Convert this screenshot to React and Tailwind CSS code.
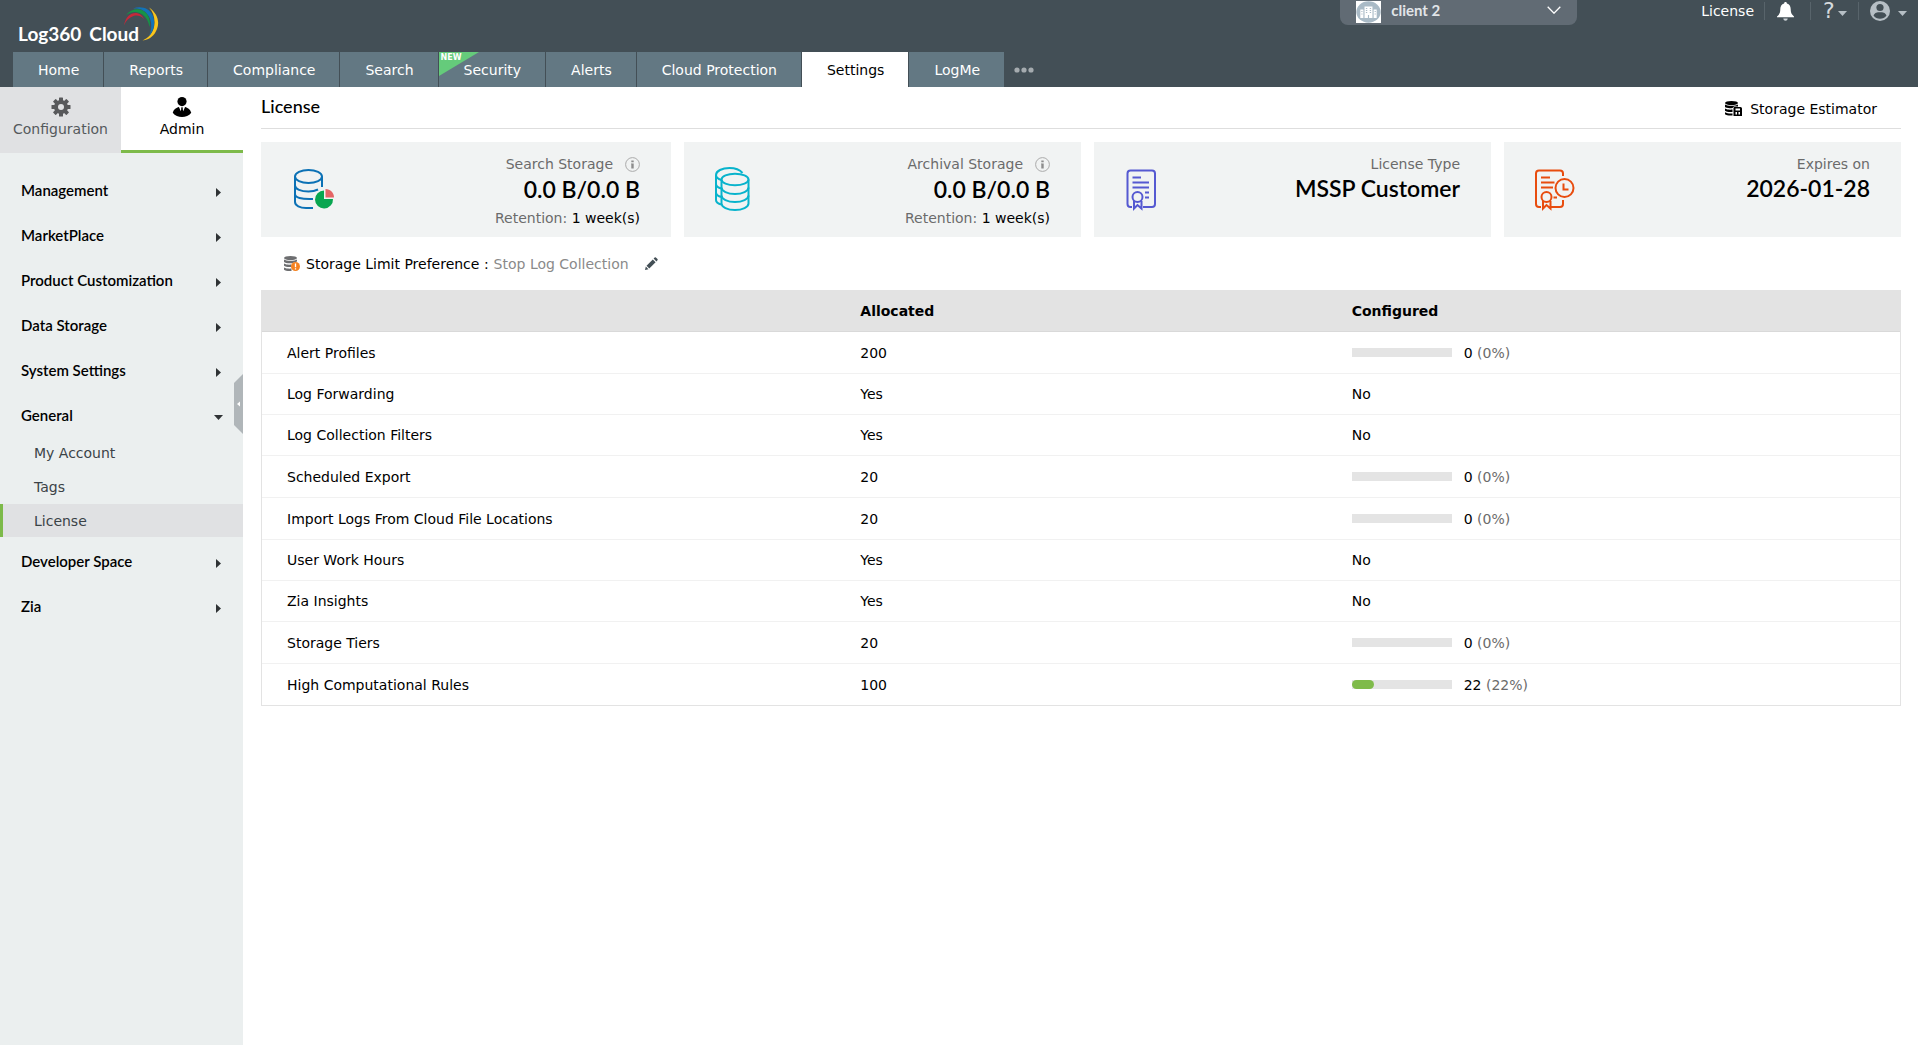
import React, { useState } from 'react';

const TABS = ['Home', 'Reports', 'Compliance', 'Search', 'Security', 'Alerts', 'Cloud Protection', 'Settings', 'LogMe'];

const MENU = [
  { name: 'Management' },
  { name: 'MarketPlace' },
  { name: 'Product Customization' },
  { name: 'Data Storage' },
  { name: 'System Settings' },
  { name: 'General', items: ['My Account', 'Tags', 'License'] },
  { name: 'Developer Space' },
  { name: 'Zia' },
];

const ROWS = [
  { name: 'Alert Profiles', allocated: 200, used: 0 },
  { name: 'Log Forwarding', allocated: 'Yes', configured: 'No' },
  { name: 'Log Collection Filters', allocated: 'Yes', configured: 'No' },
  { name: 'Scheduled Export', allocated: 20, used: 0 },
  { name: 'Import Logs From Cloud File Locations', allocated: 20, used: 0 },
  { name: 'User Work Hours', allocated: 'Yes', configured: 'No' },
  { name: 'Zia Insights', allocated: 'Yes', configured: 'No' },
  { name: 'Storage Tiers', allocated: 20, used: 0 },
  { name: 'High Computational Rules', allocated: 100, used: 22 },
];

function LogoArcs() {
  return (
    <svg width="36" height="36" viewBox="0 0 36 36" className="absolute left-[123px] top-[6px]" aria-hidden="true">
      <path d="M26 1.500C34 7 37 15 34 23C31.500 29.500 27 33.500 19.500 34.500C26 31.500 30 27 31.200 20C32.300 13 30.500 6 26 1.500Z" fill="#f9c51c" />
      <path d="M10 2.500C18 -0.500 26 2 29.500 9C32.500 16 31.500 24 26 30C29 23 29 16 26 10.500C22.500 4.500 17 2 10 2.500Z" fill="#1273b9" />
      <path d="M3 9C9 1.500 19 1.500 24 8C27 12.500 27.500 17 26.500 21C25.500 15.500 23.500 11.500 19.500 8.500C14.500 5 9 5 3 9Z" fill="#159447" />
      <path d="M1 19.500C2.500 10.500 8 6.500 13.500 7C17 7.500 19.500 9.500 21 13C17.500 9.500 14 9 10.500 10C6 11.500 3 14.500 1 19.500Z" fill="#c6283a" />
    </svg>
  );
}

function Caret({ className }) {
  return (
    <svg width="9" height="5" viewBox="0 0 9 5" className={className} aria-hidden="true">
      <path d="M0 0H9L4.500 5Z" fill="currentColor" />
    </svg>
  );
}

function Header() {
  const [active, setActive] = useState('Settings');

  return (
    <header className="bg-[#434f56] text-white">
      <div className="relative flex h-[52px] items-start justify-between">
        <a href="#home" className="ml-[18px] mt-[22px] flex gap-2 font-[Lato,sans-serif] text-[19px] font-bold leading-6">
          <span>Log360</span>
          <span>Cloud</span>
        </a>
        <LogoArcs />

        <div className="flex items-start">
          <div className="mr-[124px] flex h-[25px] w-[237px] items-start rounded-b-lg bg-[#616b74] px-4">
            <svg width="25" height="22" viewBox="0 0 22 22" preserveAspectRatio="none" className="mt-px shrink-0" aria-hidden="true">
              <rect width="22" height="22" fill="#fff" />
              <circle cx="11" cy="11" r="10.700" fill="#a9bac6" />
              <path d="M7.500 5.500h7V17h-7ZM3.800 8.500h2.700V17H3.800ZM15.500 8.500h2.700V17h-2.700Z" fill="#fff" />
              <path d="M8.700 7.500h1.200M12.100 7.500h1.200M8.700 9.500h1.200M12.100 9.500h1.200M8.700 11.500h1.200M12.100 11.500h1.200M4.700 10.500h1M4.700 13h1M16.400 10.500h1M16.400 13h1M11 14v3" stroke="#a9bac6" />
            </svg>
            <select aria-label="Client" className="ml-[10px] h-5 flex-1 appearance-none bg-transparent font-[Lato,sans-serif] text-[15px] font-bold leading-5 text-[#e1e5e8]">
              <option>client 2</option>
            </select>
            <svg width="14" height="8" viewBox="0 0 14 8" className="mt-[6px]" aria-hidden="true">
              <path d="M0.700 0.700L7 7.200L13.300 0.700" fill="none" stroke="#fff" strokeWidth="1.300" />
            </svg>
          </div>

          <div className="flex h-[22px] items-center pr-[11px] text-sm">
            <a href="#license" className="pr-[10px]">License</a>
            <button type="button" aria-label="Notifications" className="flex h-[18px] w-[46px] items-center border-l border-[#58646b] pl-3">
              <svg width="17" height="19" viewBox="0 0 17 19" className="shrink-0" aria-hidden="true">
                <path d="M8.500 0C9.300 0 9.900 0.600 9.900 1.400C12.500 2 13.700 4.200 13.700 7C13.700 10.500 14.300 12 17 14.500V15.300H0V14.500C2.700 12 3.300 10.500 3.300 7C3.300 4.200 4.500 2 7.100 1.400C7.100 0.600 7.700 0 8.500 0Z" fill="#fff" />
                <path d="M6.300 16.500H10.700C10.500 18 9.700 18.700 8.500 18.700S6.500 18 6.300 16.500Z" fill="#ccd2d6" />
              </svg>
            </button>
            <button type="button" aria-label="Help" className="flex h-[18px] w-[48px] items-center border-l border-[#58646b] pl-3 text-[#b6bfc5]">
              <span className="text-[22px] leading-6 text-[#d5dadd]">?</span>
              <Caret className="ml-[3px] mt-1 shrink-0" />
            </button>
            <button type="button" aria-label="Account" className="flex h-[18px] items-center border-l border-[#58646b] pl-[11px] text-[#b6bfc5]">
              <svg width="20" height="20" viewBox="0 0 20 20" aria-hidden="true">
                <circle cx="10" cy="10" r="10" fill="currentColor" />
                <circle cx="10" cy="6.500" r="3.600" fill="#434f56" />
                <path d="M3.500 14.500C5 11.500 7 11.300 10 11.300S15 11.500 16.500 14.500C15 16.800 12.500 17.800 10 17.800S5 16.800 3.500 14.500Z" fill="#434f56" />
              </svg>
              <Caret className="ml-2 mt-1" />
            </button>
          </div>
        </div>
      </div>

      <nav className="flex h-[35px] pl-[13px] text-sm">
        {TABS.map(tab => (
          <a
            key={tab}
            href={`#${tab.toLowerCase().replace(' ', '-')}`}
            onClick={() => setActive(tab)}
            className={`relative flex items-center border-r border-[#434f56] pl-[25px] pr-6 ${active === tab ? 'bg-white text-black' : 'bg-[#637883] text-white'}`}
          >
            {tab === 'Security' && (
              <span className="absolute left-0 top-0">
                <svg width="40" height="24" viewBox="0 0 40 24" aria-hidden="true">
                  <path d="M0 0H40L0 24Z" fill="#65cb7b" />
                </svg>
                <span className="absolute left-[2px] top-[2px] text-[8px] font-bold leading-2">NEW</span>
              </span>
            )}
            <span className="relative">{tab}</span>
          </a>
        ))}
        <button type="button" aria-label="More" className="px-[9px] text-[#a5abaf]">
          <svg width="20" height="6" viewBox="0 0 20 6" fill="currentColor" aria-hidden="true">
            <circle cx="3" cy="3" r="2.600" />
            <circle cx="10" cy="3" r="2.600" />
            <circle cx="17" cy="3" r="2.600" />
          </svg>
        </button>
      </nav>
    </header>
  );
}

function Sidebar() {
  const [open, setOpen] = useState('General');

  return (
    <aside className="relative w-[243px] shrink-0 bg-[#ebefef]">
      <div className="flex h-[66px] text-sm leading-6">
        <a href="#configuration" className="flex w-[121px] flex-col items-center bg-[#e0e1e3] pt-[10px] text-[#55595c]">
          <svg width="20" height="20" viewBox="0 0 20 20" aria-hidden="true">
            <g fill="#58595b">
              <rect x="8" y="0.500" width="4" height="19" rx="0.600" />
              <rect x="8" y="0.500" width="4" height="19" rx="0.600" transform="rotate(45 10 10)" />
              <rect x="8" y="0.500" width="4" height="19" rx="0.600" transform="rotate(90 10 10)" />
              <rect x="8" y="0.500" width="4" height="19" rx="0.600" transform="rotate(135 10 10)" />
              <circle cx="10" cy="10" r="7" />
            </g>
            <circle cx="10" cy="10" r="3" fill="#e0e1e3" />
          </svg>
          Configuration
        </a>
        <a href="#admin" className="flex flex-1 flex-col items-center border-b-3 border-[#7dba4a] bg-white pt-[10px] text-black">
          <svg width="20" height="20" viewBox="0 0 20 21" aria-hidden="true">
            <circle cx="10" cy="4.800" r="4.800" />
            <path d="M0.300 16.500C1.500 12.500 4 11.300 6.800 10.500L8.700 15L9.300 12.300L8.800 11H11.200L10.700 12.300L11.300 15L13.200 10.500C16 11.300 18.500 12.500 19.700 16.500C17.500 19.500 13.500 21 10 21S2.500 19.500 0.300 16.500Z" />
          </svg>
          Admin
        </a>
      </div>

      <nav className="flex flex-col gap-1 pt-[17px]">
        {MENU.map(group => (
          <div key={group.name}>
            <button
              type="button"
              onClick={() => setOpen(open === group.name ? '' : group.name)}
              className="flex h-[41px] w-full items-center justify-between pl-[21px] pr-5 font-[Lato,sans-serif] text-[15px] font-semibold text-black"
            >
              {group.name}
              {open === group.name ? (
                <Caret className="mt-1 text-[#2f3335]" />
              ) : (
                <svg width="5" height="9" viewBox="0 0 5 9" className="mr-[2px] mt-1" aria-hidden="true">
                  <path d="M0 0L5 4.500L0 9Z" fill="#2f3335" />
                </svg>
              )}
            </button>
            {group.items && open === group.name && (
              <ul className="flex flex-col gap-px text-sm text-[#3b4347]">
                {group.items.map(item => (
                  <li key={item}>
                    <a
                      href={`#${item.toLowerCase().replace(' ', '-')}`}
                      className={`flex h-[33px] items-center border-l-3 pl-[31px] ${item === 'License' ? 'border-[#7dba4a] bg-[#e0e1e3]' : 'border-transparent'}`}
                    >
                      {item}
                    </a>
                  </li>
                ))}
              </ul>
            )}
          </div>
        ))}
      </nav>

      <button type="button" aria-label="Collapse sidebar" className="absolute right-0 top-[287px]">
        <svg width="9" height="60" viewBox="0 0 9 60" aria-hidden="true">
          <path d="M9 0V60L0 51V9Z" fill="#b0b6b9" />
          <path d="M6 27.500V32.500L3 30Z" fill="#fff" />
        </svg>
      </button>
    </aside>
  );
}

function SearchStorageIcon() {
  return (
    <svg width="44" height="44" viewBox="0 0 44 44" fill="none" stroke="#0c71b5" strokeWidth="2" aria-hidden="true">
      <ellipse cx="16.500" cy="9.500" rx="13.500" ry="6.500" />
      <path d="M3 9.500V35C3 38.500 8 41 14 41H21" />
      <path d="M30 9.500V20" />
      <path d="M3 18.500C3 22 9 24.500 16.500 24.500C20 24.500 24 23.500 26 22.500" />
      <path d="M3 27C3 30.500 9 32.500 21 32" />
      <path d="M32 23.500V32H41A9 9 0 1 1 32 23.500Z" fill="#09a650" stroke="none" />
      <path d="M33.500 22V30.500H42C42 26 38.500 22 33.500 22Z" fill="#e56565" stroke="none" />
    </svg>
  );
}

function ArchivalStorageIcon() {
  return (
    <svg width="44" height="44" viewBox="0 0 44 44" fill="none" stroke="#08b3cc" strokeWidth="2" aria-hidden="true">
      <path d="M27.500 6C25 3 20 1 14.500 1C7 1 1 4 1 8C1 10 3 12 6.500 13" />
      <path d="M1 8V33C1 35 3 36.500 6 37.500M1 17C1 19 3 20.500 6 21.500M1 25.500C1 27.500 3 29 6 30" />
      <ellipse cx="20" cy="12.500" rx="13.500" ry="5.800" />
      <path d="M6.500 12.500V36.500C6.500 40 12.500 43 20 43S33.500 40 33.500 36.500V12.500" />
      <path d="M6.500 20.500C6.500 24 12.500 27 20 27S33.500 24 33.500 20.500M6.500 28.500C6.500 32 12.500 35 20 35S33.500 32 33.500 28.500" />
    </svg>
  );
}

function LicenseTypeIcon() {
  return (
    <svg width="44" height="44" viewBox="-1 -1 44 44" fill="none" stroke="#5559d1" strokeWidth="2" aria-hidden="true">
      <path d="M6 39H4.500Q1.500 39 1.500 36V5.500Q1.500 2.500 4.500 2.500H26Q29 2.500 29 5.500V36Q29 39 26 39H17" />
      <path d="M6.500 9.500H15M6.500 14.500H23M6.500 19.500H23M19 24.500H23M19 29.500H23" />
      <circle cx="11.500" cy="29" r="5" />
      <path d="M8 33V40.500L11.500 37L15.500 40.500V33" />
    </svg>
  );
}

function ExpiryIcon() {
  return (
    <svg width="44" height="44" viewBox="0 -1 44 44" fill="none" stroke="#e84c0e" strokeWidth="2" aria-hidden="true">
      <path d="M6 39H4Q1 39 1 36V5.500Q1 2.500 4 2.500H25Q28 2.500 28 5.500V8" />
      <path d="M28 32V36Q28 39 25 39H16" />
      <path d="M6 9.500H15M6 14.500H19.500M6 19.500H18M18.500 29.500H22" />
      <circle cx="11.500" cy="29" r="5" />
      <path d="M8 33V40.500L11.500 37L15.500 40.500V33" />
      <circle cx="29.500" cy="20" r="9" />
      <path d="M28.500 15.500V21.500H33.500" />
    </svg>
  );
}

function InfoIcon() {
  return (
    <svg width="15" height="15" viewBox="0 0 15 15" aria-hidden="true">
      <circle cx="7.500" cy="7.500" r="6.900" fill="none" stroke="#aaa" />
      <path d="M6.300 3.500H8.700V5.300H6.300ZM6 6.500H8.700V11.500H6.300V7.300H6Z" fill="#8d8d8d" />
    </svg>
  );
}

function StatCard({ icon, label, value, retention, className = '' }) {
  return (
    <section className={`flex h-[95px] justify-between bg-[#f1f3f3] px-[31px] ${className}`}>
      <div className="pt-[25px]">{icon}</div>
      <div className="flex flex-col items-end pt-3 text-sm leading-5">
        <h3 className="flex items-center gap-3 text-[#6b6b6b]">
          {label}
          {retention && (
            <button type="button" aria-label={`About ${label}`}><InfoIcon /></button>
          )}
        </h3>
        <p className={`font-[Lato,sans-serif] text-[23px] font-semibold text-black ${retention ? 'pb-1 leading-[30px]' : 'leading-7'}`}>{value}</p>
        {retention && (
          <p className="text-[#6b6b6b]">Retention: <span className="text-black">{retention}</span></p>
        )}
      </div>
    </section>
  );
}

function UsageBar({ used, total }) {
  const percent = Math.round((used / total) * 100);
  return (
    <div className="flex h-[21px] items-center">
      <div className="mr-3 h-[9px] w-[100px] bg-[#e4e4e4]">
        <div className="h-full rounded-full bg-[#7fbb4a]" style={{ width: `${percent}%` }} />
      </div>
      <span>{used} <span className="text-[#6b6b6b]">({percent}%)</span></span>
    </div>
  );
}

function LimitTable() {
  return (
    <table className="w-full table-fixed border-separate border-spacing-0 border border-t-0 border-[#e3e3e3] text-left text-sm leading-5">
      <thead className="bg-[#e3e3e3]">
        <tr className="h-[42px]">
          <th aria-label="Feature" className="w-[35%] border-b border-[#d9d9d9]" />
          <th className="w-[30%] border-b border-[#d9d9d9] pl-[25px]">Allocated</th>
          <th className="w-[35%] border-b border-[#d9d9d9] pl-[25px]">Configured</th>
        </tr>
      </thead>
      <tbody className="[&>tr:last-child>td]:border-b-0">
        {ROWS.map(row => (
          <tr key={row.name}>
            <td className="border-b border-[#f1f1f1] py-[10px] pl-[25px]">{row.name}</td>
            <td className="border-b border-[#f1f1f1] py-[10px] pl-[25px]">{row.allocated}</td>
            <td className="border-b border-[#f1f1f1] py-[10px] pl-[25px]">
              {row.configured || <UsageBar used={row.used} total={row.allocated} />}
            </td>
          </tr>
        ))}
      </tbody>
    </table>
  );
}

export default function App() {
  return (
    <div className="flex min-h-screen flex-col bg-white font-['DejaVu_Sans',sans-serif] text-black">
      <Header />
      <div className="flex flex-1">
        <Sidebar />
        <main className="min-w-0 flex-1 pl-[18px] pr-[17px]">
          <div className="flex h-[42px] items-center justify-between border-b border-[#dedede] pr-6">
            <h1 className="pb-1 font-[Lato,sans-serif] text-lg font-medium">License</h1>
            <a href="#estimator" className="flex items-center gap-2 pt-[2px] text-sm">
              <svg width="17" height="15" viewBox="0 0 17 15" aria-hidden="true">
                <ellipse cx="6.500" cy="2" rx="6.500" ry="2" />
                <path d="M0 3.500C2 5.200 11 5.200 13 3.500V5.500H9L7.500 7C4 7.500 1 7 0 6ZM0 7.500C2 8.700 5 8.800 7.500 8.500V11C4 11.200 1 10.800 0 9.800ZM0 11.300C2 12.500 5 12.600 7.500 12.400V14.500C4 14.700 1 14.300 0 13.300Z" />
                <path d="M9.500 6H15.500Q17 6 17 7.500V15H8.500V7Q8.500 6 9.500 6ZM10.500 7.500V9.500H15V7.500ZM10.500 11V13.500H12V11ZM13.500 11V13.500H15V11Z" fillRule="evenodd" />
              </svg>
              Storage Estimator
            </a>
          </div>

          <div className="grid grid-cols-4 pt-[13px]">
            <StatCard icon={<SearchStorageIcon />} label="Search Storage" value="0.0 B/0.0 B" retention="1 week(s)" />
            <StatCard className="ml-[13px]" icon={<ArchivalStorageIcon />} label="Archival Storage" value="0.0 B/0.0 B" retention="1 week(s)" />
            <StatCard className="ml-[13px]" icon={<LicenseTypeIcon />} label="License Type" value="MSSP Customer" />
            <StatCard className="ml-[13px]" icon={<ExpiryIcon />} label="Expires on" value="2026-01-28" />
          </div>

          <div className="flex h-[53px] items-center pl-[23px] text-sm">
            <svg width="16" height="16" viewBox="0 0 16 16" className="mr-[6px]" aria-hidden="true">
              <ellipse cx="6.500" cy="2" rx="6.500" ry="2" fill="#6d6e70" />
              <path d="M0 3.500C2 5.200 11 5.200 13 3.500V5.500C10 6.500 9 7 7.500 7.300C4 7.500 1 7 0 6ZM0 7.500C2 8.700 5 8.800 7.500 8.500V11C4 11.200 1 10.800 0 9.800ZM0 11.500C2 12.700 5 12.800 7.500 12.600V15C4 15.200 1 14.800 0 13.800Z" fill="#6d6e70" />
              <circle cx="11.500" cy="10.500" r="4.500" fill="#f58220" />
              <path d="M11.500 7.500V11.300M11.500 12.200V13.500" stroke="#fff" strokeWidth="1.300" />
            </svg>
            <span>Storage Limit Preference :</span>
            <span className="ml-[5px] text-[#8a8a8a]">Stop Log Collection</span>
            <button type="button" aria-label="Edit preference" className="ml-4">
              <svg width="13" height="13" viewBox="0 0 13 13" fill="#434f56" aria-hidden="true">
                <path d="M0 13L0.800 9.500L3.500 12.200ZM1.500 8.700L7.800 2.400L10.600 5.200L4.300 11.500ZM8.600 1.600L9.700 0.500Q10.300 0 10.900 0.500L12.500 2.100Q13 2.700 12.500 3.300L11.400 4.400Z" />
              </svg>
            </button>
          </div>

          <LimitTable />
        </main>
      </div>
    </div>
  );
}
